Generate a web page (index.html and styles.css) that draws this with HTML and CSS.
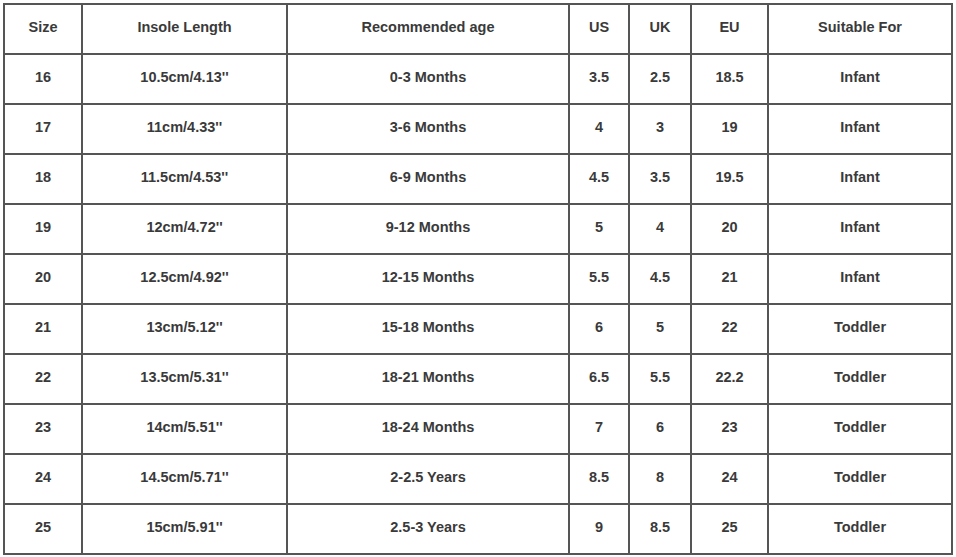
FILE: index.html
```html
<!DOCTYPE html>
<html>
<head>
<meta charset="utf-8">
<link rel="stylesheet" href="styles.css">
</head>
<body>
<table class="size-chart">
  <colgroup>
    <col class="c-size"><col class="c-insole"><col class="c-age"><col class="c-us"><col class="c-uk"><col class="c-eu"><col class="c-for">
  </colgroup>
  <thead>
    <tr><th>Size</th><th>Insole Length</th><th>Recommended age</th><th>US</th><th>UK</th><th>EU</th><th>Suitable For</th></tr>
  </thead>
  <tbody>
    <tr><td>16</td><td>10.5cm/4.13''</td><td>0-3 Months</td><td>3.5</td><td>2.5</td><td>18.5</td><td>Infant</td></tr>
    <tr><td>17</td><td>11cm/4.33''</td><td>3-6 Months</td><td>4</td><td>3</td><td>19</td><td>Infant</td></tr>
    <tr><td>18</td><td>11.5cm/4.53''</td><td>6-9 Months</td><td>4.5</td><td>3.5</td><td>19.5</td><td>Infant</td></tr>
    <tr><td>19</td><td>12cm/4.72''</td><td>9-12 Months</td><td>5</td><td>4</td><td>20</td><td>Infant</td></tr>
    <tr><td>20</td><td>12.5cm/4.92''</td><td>12-15 Months</td><td>5.5</td><td>4.5</td><td>21</td><td>Infant</td></tr>
    <tr><td>21</td><td>13cm/5.12''</td><td>15-18 Months</td><td>6</td><td>5</td><td>22</td><td>Toddler</td></tr>
    <tr><td>22</td><td>13.5cm/5.31''</td><td>18-21 Months</td><td>6.5</td><td>5.5</td><td>22.2</td><td>Toddler</td></tr>
    <tr><td>23</td><td>14cm/5.51''</td><td>18-24 Months</td><td>7</td><td>6</td><td>23</td><td>Toddler</td></tr>
    <tr><td>24</td><td>14.5cm/5.71''</td><td>2-2.5 Years</td><td>8.5</td><td>8</td><td>24</td><td>Toddler</td></tr>
    <tr><td>25</td><td>15cm/5.91''</td><td>2.5-3 Years</td><td>9</td><td>8.5</td><td>25</td><td>Toddler</td></tr>
  </tbody>
</table>
</body>
</html>
```
FILE: styles.css
```css
html, body {
  margin: 0;
  padding: 0;
  background: #ffffff;
}
body {
  padding: 3px;
  font-family: "Liberation Sans", Arial, sans-serif;
}
.size-chart {
  border-collapse: collapse;
  table-layout: fixed;
  width: 950px;
  border: 2px solid #555555;
}
.c-size { width: 78px; }
.c-insole { width: 205px; }
.c-age { width: 282px; }
.c-us { width: 60px; }
.c-uk { width: 62px; }
.c-eu { width: 77px; }
.c-for { width: 184px; }
.size-chart th,
.size-chart td {
  border: 2px solid #555555;
  height: 48px;
  padding: 0 0 4px 0;
  box-sizing: border-box;
  text-align: center;
  vertical-align: middle;
  font-size: 14.5px;
  font-weight: bold;
  color: #3a3a3a;
}
.size-chart tr {
  height: 50px;
}
```
